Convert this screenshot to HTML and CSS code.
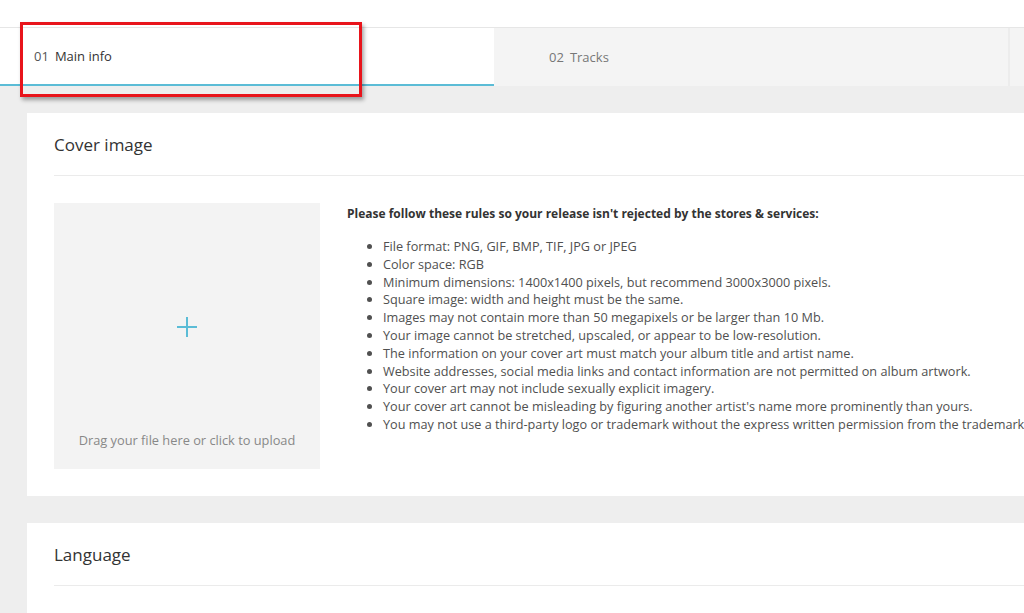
FILE: index.html
```html
<!DOCTYPE html>
<html>
<head>
<meta charset="utf-8">
<link rel="stylesheet" href="styles.css">
</head>
<body>
<div class="topbar"></div>
<div class="tabs">
  <div class="tab active"><span class="num">01</span> Main info</div>
  <div class="tab"><span class="num">02</span> Tracks</div>
  <div class="tab rest"></div>
</div>
<div class="highlight"></div>
<main class="content">
  <section class="card">
    <h2 class="card-title">Cover image</h2>
    <div class="card-body">
      <div class="upload">
        <div class="plus">
          <svg width="22" height="22" viewBox="0 0 22 22"><path d="M11 1v20M1 11h20" stroke="#5bbcd6" stroke-width="2" fill="none"/></svg>
        </div>
        <div class="upload-text">Drag your file here or click to upload</div>
      </div>
      <div class="rules">
        <p class="rules-head">Please follow these rules so your release isn't rejected by the stores &amp; services:</p>
        <ul>
          <li>File format: PNG, GIF, BMP, TIF, JPG or JPEG</li>
          <li>Color space: RGB</li>
          <li>Minimum dimensions: 1400x1400 pixels, but recommend 3000x3000 pixels.</li>
          <li>Square image: width and height must be the same.</li>
          <li>Images may not contain more than 50 megapixels or be larger than 10 Mb.</li>
          <li>Your image cannot be stretched, upscaled, or appear to be low-resolution.</li>
          <li>The information on your cover art must match your album title and artist name.</li>
          <li>Website addresses, social media links and contact information are not permitted on album artwork.</li>
          <li>Your cover art may not include sexually explicit imagery.</li>
          <li>Your cover art cannot be misleading by figuring another artist's name more prominently than yours.</li>
          <li>You may not use a third-party logo or trademark without the express written permission from the trademark</li>
        </ul>
      </div>
    </div>
  </section>
  <section class="card">
    <h2 class="card-title">Language</h2>
    <div class="card-body short"></div>
  </section>
</main>
</body>
</html>
```
FILE: styles.css
```css
html, body {
  margin: 0;
  padding: 0;
  width: 1024px;
  height: 613px;
  overflow: hidden;
  background: #eeeeee;
  font-family: "Open Sans", "Noto Sans", sans-serif;
  color: #333;
}
.topbar {
  height: 27px;
  background: #fff;
  border-bottom: 1px solid #e6e6e6;
}
.tabs {
  display: flex;
  height: 58px;
  width: 1100px;
}
.tab {
  box-sizing: border-box;
  width: 516px;
  background: #f4f4f4;
  color: #777;
  font-size: 13px;
  display: flex;
  align-items: center;
  padding-left: 55px;
  border-right: 2px solid #ececec;
}
.tab .num { margin-right: 6px; }
.tab.active {
  width: 494px;
  background: #fff;
  color: #333;
  padding-left: 34px;
  border-right: none;
  border-bottom: 2px solid #5bbcd6;
}
.tab.active .num { color: #555; }
.tab.rest { width: 90px; border-right: none; }
.highlight {
  position: absolute;
  left: 20px;
  top: 22px;
  width: 336px;
  height: 69px;
  border: 3px solid #e8141b;
  box-shadow: 2px 3px 4px rgba(0,0,0,0.35);
}
.content {
  padding: 27px 0 0 27px;
  width: 1100px;
}
.card {
  background: #fff;
  margin-bottom: 27px;
}
.card-title {
  margin: 0 27px;
  height: 63px;
  box-sizing: border-box;
  border-bottom: 1px solid #ebebeb;
  font-size: 17px;
  font-weight: 400;
  color: #333;
  display: flex;
  align-items: center;
}
.card-body {
  display: flex;
  padding: 27px;
  gap: 27px;
}
.upload {
  width: 266px;
  height: 266px;
  flex: none;
  background: #f3f3f3;
  display: flex;
  flex-direction: column;
  align-items: center;
}
.plus {
  margin-top: 113px;
  height: 22px;
}
.upload-text {
  margin-top: auto;
  margin-bottom: 20px;
  font-size: 12.8px;
  color: #888;
}
.rules {
  font-size: 12.7px;
  color: #505050;
  padding-top: 2px;
}
.rules-head {
  margin: 0 0 16px;
  font-weight: 700;
  color: #333;
  font-size: 12px;
}
.rules ul {
  margin: 0;
  padding-left: 36px;
  line-height: 17.8px;
  white-space: nowrap;
}
```
